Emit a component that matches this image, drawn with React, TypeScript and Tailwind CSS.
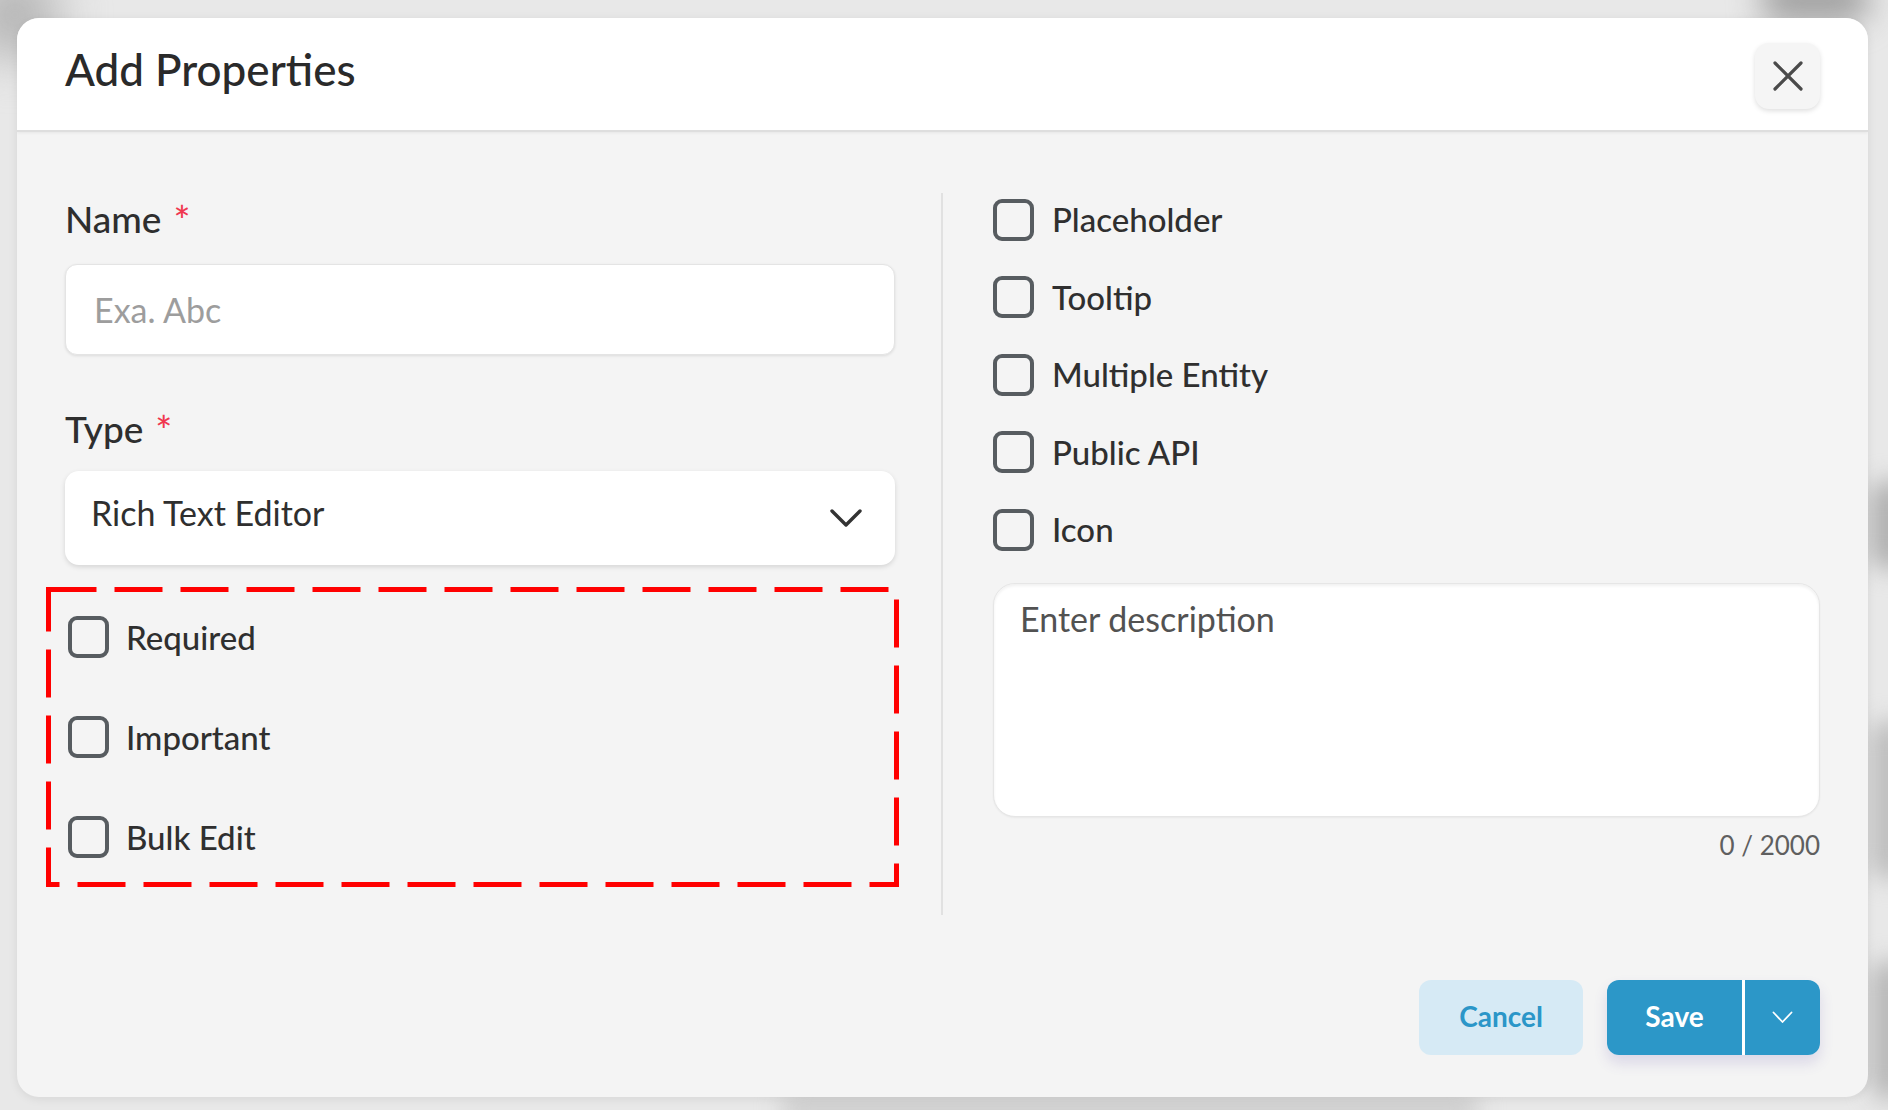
import React from "react";

function Checkbox() {
  return <div className="w-[41px] h-[42px] shrink-0 rounded-[9px] border-[4px] border-[#575c60]" />;
}

function CheckRow({ label, h }: { label: string; h: string }) {
  return (
    <div className={`${h} flex items-center gap-[17px]`}>
      <Checkbox />
      <span className="text-[33px] font-medium text-[#2f2f2f] leading-none">{label}</span>
    </div>
  );
}

export default function App() {
  const rightItems = ["Placeholder", "Tooltip", "Multiple Entity", "Public API", "Icon"];
  return (
    <div className="relative h-screen w-full overflow-hidden bg-[#e8e8e8] font-['Lato',sans-serif] pl-[17px] pt-[18px]">
      {/* blurred backdrop */}
      <div className="pointer-events-none absolute -left-[30px] -top-[30px] h-[90px] w-[90px] rounded-full bg-[#b5b5b5] blur-xl" />
      <div className="pointer-events-none absolute left-[1760px] -top-[20px] h-[40px] w-[110px] rounded-full bg-[#9a9a9a] blur-lg" />
      <div className="pointer-events-none absolute left-[1870px] top-[480px] h-[90px] w-[40px] rounded-full bg-[#b0b0b0] blur-md" />
      <div className="pointer-events-none absolute left-[1870px] top-[720px] h-[160px] w-[40px] rounded-full bg-[#bdbdbd] blur-md" />
      <div className="pointer-events-none absolute left-[1870px] top-[960px] h-[140px] w-[40px] rounded-full bg-[#b8b8b8] blur-md" />
      <div className="pointer-events-none absolute left-[780px] top-[1098px] h-[20px] w-[700px] rounded-full bg-[#c2c2c2] blur-md" />

      <div className="relative flex h-[1079px] w-[1851px] flex-col overflow-hidden rounded-[22px] bg-[#f4f4f4] shadow-[0_2px_10px_rgba(0,0,0,0.08)]">
        {/* Header */}
        <div className="flex h-[114px] shrink-0 items-center justify-between border-b-2 border-[#dedede] bg-white px-[48px] shadow-[0_1px_3px_rgba(0,0,0,0.06)]">
          <h1 className="mb-[9px] text-[44px] font-medium leading-[53px] text-[#2a2a2a]">Add Properties</h1>
          <button className="mt-[4px] flex h-[66px] w-[65px] items-center justify-center rounded-[14px] bg-[#f5f5f5] shadow-[0_2px_5px_rgba(0,0,0,0.13)]">
            <svg width="30" height="30" viewBox="0 0 30 30" fill="none">
              <path d="M2 2 L28 28 M28 2 L2 28" stroke="#4a4a4a" strokeWidth="3.2" strokeLinecap="round" />
            </svg>
          </button>
        </div>

        {/* Body */}
        <div className="flex flex-1 flex-col px-[48px] pt-[61px] pb-[42px]">
          <div className="flex items-start">
            {/* Left column */}
            <div className="flex w-[830px] shrink-0 flex-col">
              <div className="h-[50px] text-[37px] font-medium leading-[50px] text-[#2e2e2e]">
                Name<span className="relative top-[2px] ml-[12px] text-[40px] text-[#f0374f]">*</span>
              </div>
              <input
                className="mt-[21px] h-[91px] w-full rounded-[12px] border border-[#e4e4e4] bg-white pl-[28px] text-[34px] text-[#333] shadow-[0_1px_3px_rgba(0,0,0,0.1)] outline-none placeholder:text-[#9d9d9d]"
                placeholder="Exa. Abc"
              />
              <div className="mt-[48px] h-[50px] text-[37px] font-medium leading-[50px] text-[#2e2e2e]">
                Type<span className="relative top-[2px] ml-[12px] text-[40px] text-[#f0374f]">*</span>
              </div>
              <div className="mt-[18px] flex h-[94px] w-full items-center justify-between rounded-[14px] bg-white pl-[26px] pr-[33px] shadow-[0_2px_5px_rgba(0,0,0,0.13)]">
                <span className="pb-[10px] text-[34px] leading-[40px] text-[#2f2f2f]">Rich Text Editor</span>
                <svg width="32" height="19" viewBox="0 0 32 19" fill="none">
                  <path d="M2 2 L16 16 L30 2" stroke="#333" strokeWidth="3.4" strokeLinecap="round" strokeLinejoin="round" />
                </svg>
              </div>
              <div className="relative mt-[22px] -ml-[19px] -mr-[4px] flex h-[300px] flex-col gap-[58px] pl-[22px] pt-[29px]">
                <svg className="pointer-events-none absolute inset-0 h-full w-full" preserveAspectRatio="none">
                  <rect x="2.5" y="2.5" width="848" height="295" fill="none" stroke="#ff0000" strokeWidth="5" strokeDasharray="48 18" />
                </svg>
                <CheckRow label="Required" h="h-[42px]" />
                <CheckRow label="Important" h="h-[42px]" />
                <CheckRow label="Bulk Edit" h="h-[42px]" />
              </div>
            </div>

            {/* Divider */}
            <div className="ml-[46px] h-[722px] w-[2px] shrink-0 bg-[#e1e1e1]" />

            {/* Right column */}
            <div className="ml-[50px] flex flex-1 flex-col">
              <div className="flex flex-col gap-[36.5px] pt-[6px]">
                {rightItems.map((l) => (
                  <div key={l} className="flex h-[41px] items-center gap-[18px]">
                    <Checkbox />
                    <span className="text-[33px] font-medium leading-none text-[#2f2f2f]">{l}</span>
                  </div>
                ))}
              </div>
              <textarea
                className="mt-[33px] h-[234px] w-full resize-none rounded-[22px] border border-[#e6e6e6] bg-white pl-[26px] pt-[14px] text-[34px] leading-[41px] text-[#333] shadow-[inset_0_2px_3px_rgba(0,0,0,0.06),0_1px_2px_rgba(0,0,0,0.05)] outline-none placeholder:text-[#525252]"
                placeholder="Enter description"
              />
              <div className="mt-[12px] h-[32px] text-right text-[26px] leading-[32px] text-[#5f5f5f]">0 / 2000</div>
            </div>
          </div>

          {/* Footer */}
          <div className="mt-[65px] flex justify-end gap-[24px]">
            <button className="flex h-[75px] w-[164px] items-center justify-center rounded-[12px] bg-[#d6eaf5] pb-[3px] text-[28px] font-bold text-[#2b96c8]">
              Cancel
            </button>
            <div className="flex h-[75px] overflow-hidden rounded-[12px] shadow-[0_8px_14px_rgba(90,70,170,0.16)]">
              <button className="flex h-full w-[135px] items-center justify-center bg-[#2c97c8] pb-[3px] text-[28px] font-bold text-white">
                Save
              </button>
              <div className="w-[3px] bg-white" />
              <button className="flex h-full w-[75px] items-center justify-center bg-[#2c97c8]">
                <svg width="21" height="13" viewBox="0 0 21 13" fill="none">
                  <path d="M1.5 1.5 L10.5 11 L19.5 1.5" stroke="white" strokeWidth="1.8" strokeLinecap="round" strokeLinejoin="round" />
                </svg>
              </button>
            </div>
          </div>
        </div>
      </div>
    </div>
  );
}
